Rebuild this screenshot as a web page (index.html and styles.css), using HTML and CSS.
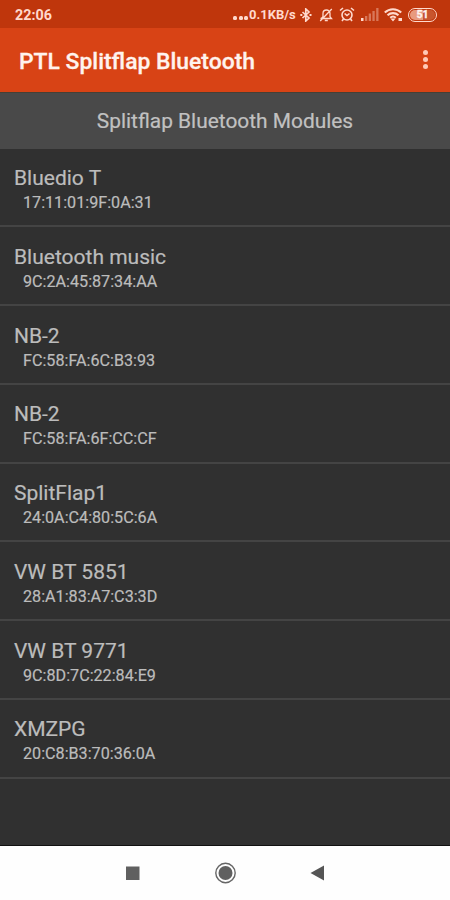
FILE: index.html
```html
<!DOCTYPE html>
<html lang="en">
<head>
<meta charset="utf-8">
<title>PTL Splitflap Bluetooth</title>
<link rel="stylesheet" href="styles.css">
</head>
<body>
<div class="screen">
  <div class="status">
    <span class="clock">22:06</span>
    <span class="dots"><i></i><i></i><i></i></span>
    <span class="rate">0.1KB/s</span>
    <svg class="bt" width="12" height="14" viewBox="0 0 12 14" fill="none" stroke="currentColor" stroke-width="1.700"><path d="M2.500 4l6.500 6-3.200 3V1L9 4 2.500 10"/><path d="M.3 7h2M9.500 7h2" stroke-width="2"/></svg>
    <svg class="bell" width="14" height="14" viewBox="0 0 14 14" fill="none" stroke="currentColor" stroke-width="1.300"><path d="M1.500 10.500h11L11 8.700V5.500C11 3.500 9.500 2 7.500 2S4 3.500 4 5.500v3.200L2.300 10.500M5.800 12.500h3M12.800 1L1.200 13"/></svg>
    <svg class="alarm" width="16" height="15" viewBox="0 0 16 15" fill="none" stroke="currentColor" stroke-width="1.600"><circle cx="8" cy="8" r="5"/><path d="M5.600 6.500L8 8.500l2.500-2M1 3.500L4 1M15 3.500L12 1M4.500 12L3 14M11.500 12l1.500 2"/></svg>
    <svg class="signal" width="18" height="13" viewBox="0 0 18 13" fill="currentColor"><path d="M0 10h2.500v3H0z"/><path opacity=".4" d="M4 8h2.300v5H4zM7.700 5.500H10V13H7.700zM11.400 3h2.300v10h-2.300zM15.200 0h2.300v13h-2.300z"/></svg>
    <svg class="wifi" width="19" height="14" viewBox="0 0 19 14" fill="none" stroke="currentColor" stroke-width="2.100"><path d="M.8 4.500C5.500.2 12.500.2 17.200 4.500M3.500 7.200c3.200-2.800 7.800-2.800 11 0M6.200 9.700c1.600-1.400 4-1.400 5.600 0"/><path d="M6.500 10.500h5L9 13.500zM14.500 10h3.500v3h-3.500z" fill="currentColor" stroke="none"/></svg>
    <span class="battery"><b>51</b></span>
  </div>
  <header class="appbar">
    <h1>PTL Splitflap Bluetooth</h1>
    <div class="more"><i></i><i></i><i></i></div>
  </header>
  <h2 class="section">Splitflap Bluetooth Modules</h2>
  <ul class="list">
    <li><p class="name">Bluedio T</p><p class="mac">17:11:01:9F:0A:31</p></li>
    <li><p class="name">Bluetooth music</p><p class="mac">9C:2A:45:87:34:AA</p></li>
    <li><p class="name">NB-2</p><p class="mac">FC:58:FA:6C:B3:93</p></li>
    <li><p class="name">NB-2</p><p class="mac">FC:58:FA:6F:CC:CF</p></li>
    <li><p class="name">SplitFlap1</p><p class="mac">24:0A:C4:80:5C:6A</p></li>
    <li><p class="name">VW BT 5851</p><p class="mac">28:A1:83:A7:C3:3D</p></li>
    <li><p class="name">VW BT 9771</p><p class="mac">9C:8D:7C:22:84:E9</p></li>
    <li><p class="name">XMZPG</p><p class="mac">20:C8:B3:70:36:0A</p></li>
  </ul>
  <nav class="nav">
    <svg width="226" height="24" viewBox="0 0 226 24"><path fill="#606060" d="M8 5.500h13.500V19H8z"/><circle cx="107.500" cy="12" r="9.700" fill="none" stroke="#666" stroke-width="1.400"/><circle cx="107.500" cy="12" r="7" fill="#606060"/><path fill="#555" d="M192.500 12L206 4.500v15z"/></svg>
  </nav>
</div>
</body>
</html>
```
FILE: styles.css
```css
* { box-sizing: border-box; margin: 0; padding: 0; }
body { background: #303030; font-family: Roboto, sans-serif; }
.screen { width: 450px; height: 900px; display: flex; flex-direction: column; overflow: hidden; }
.status {
  height: 28px; flex: none; display: flex; align-items: center;
  background: #bf360c; color: #ffd9cd; padding: 1px 13px 0 15px;
}
.clock { font-size: 14.300px; font-weight: 700; line-height: 28px; margin-right: auto; }
.dots { display: flex; gap: 1.500px; margin: 7px 1px 0 0; }
.dots i { width: 4px; height: 4px; border-radius: 1.500px; background: currentColor; }
.rate { font-size: 13px; font-weight: 700; width: 48px; white-space: nowrap; }
.bt { margin-left: 3px; }
.bell { margin-left: 7px; }
.alarm { margin-left: 6px; }
.signal { margin-left: 6px; }
.wifi { margin-left: 5px; }
.battery {
  width: 29px; height: 14px; margin-left: 5px; padding: 1px;
  border: 1.500px solid currentColor; border-radius: 7px; display: flex;
}
.battery b {
  flex: 1; border-radius: 5px; font-size: 10.500px; line-height: 10.500px; text-align: center;
  background: linear-gradient(90deg, #e89a7e 52%, #c8552e 52%); color: #fff4f0;
  -webkit-text-stroke: 0.300px #fff4f0;
}
.appbar {
  height: 64px; flex: none; display: flex; align-items: center; justify-content: space-between;
  background: #d84315; color: #fff3ee; padding: 3px 22px 0 19px;
}
.appbar h1 {
  font-size: 22.900px; font-weight: 500; line-height: 30px; white-space: nowrap;
  -webkit-text-stroke: 0.300px currentColor;
}
.more { display: flex; flex-direction: column; gap: 2px; padding-bottom: 4px; }
.more i { width: 5px; height: 5px; border-radius: 50%; background: #ffc9b6; }
.section {
  height: 56.500px; flex: none; background: #494949; color: #c1c1c1;
  border-top: 1px solid #454036;
  font-size: 20.900px; font-weight: 400; line-height: 57px; text-align: center;
  -webkit-text-stroke: 0.200px currentColor;
}
.list { list-style: none; flex: 1; }
.list li { height: 78.750px; border-bottom: 2px solid #444; padding: 15.500px 14px 0; color: #bcbcbc; }
.name { font-size: 21px; line-height: 28px; -webkit-text-stroke: 0.200px currentColor; }
.mac { font-size: 16.150px; line-height: 22px; padding-left: 9px; -webkit-text-stroke: 0.200px currentColor; }
.nav {
  height: 55px; flex: none; border-top: 1px solid #111; background: #fefefe;
  display: flex; align-items: center; justify-content: center; padding-left: 11px;
}
```
